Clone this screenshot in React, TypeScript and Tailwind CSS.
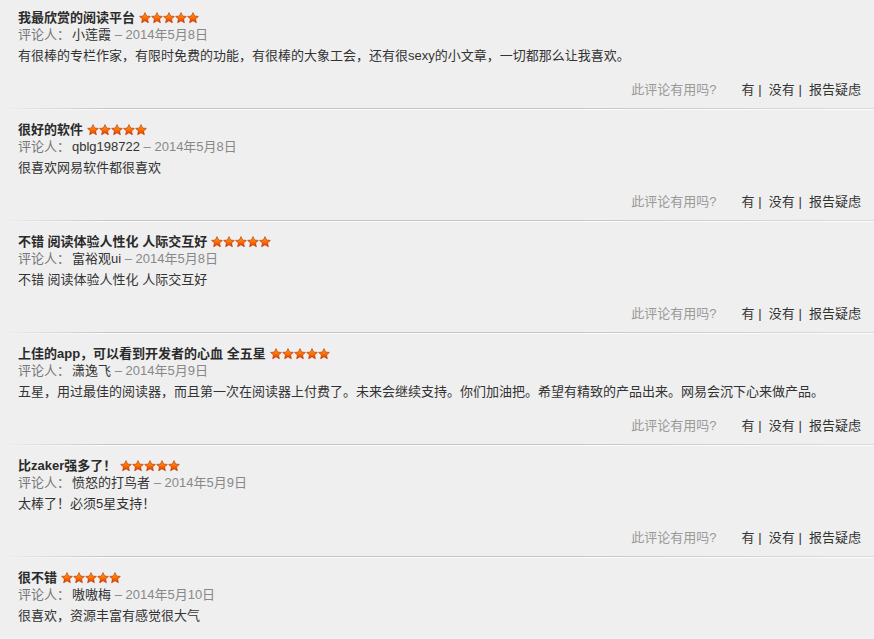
import React from "react";

interface Review {
  title: string;
  author: string;
  date: string;
  body: string;
}

const reviews: Review[] = [
  {
    title: "我最欣赏的阅读平台",
    author: "小莲霞",
    date: "2014年5月8日",
    body: "有很棒的专栏作家，有限时免费的功能，有很棒的大象工会，还有很sexy的小文章，一切都那么让我喜欢。",
  },
  {
    title: "很好的软件",
    author: "qblg198722",
    date: "2014年5月8日",
    body: "很喜欢网易软件都很喜欢",
  },
  {
    title: "不错 阅读体验人性化 人际交互好",
    author: "富裕观ui",
    date: "2014年5月8日",
    body: "不错 阅读体验人性化 人际交互好",
  },
  {
    title: "上佳的app，可以看到开发者的心血 全五星",
    author: "潇逸飞",
    date: "2014年5月9日",
    body: "五星，用过最佳的阅读器，而且第一次在阅读器上付费了。未来会继续支持。你们加油把。希望有精致的产品出来。网易会沉下心来做产品。",
  },
  {
    title: "比zaker强多了！",
    author: "愤怒的打鸟者",
    date: "2014年5月9日",
    body: "太棒了！必须5星支持！",
  },
  {
    title: "很不错",
    author: "嗷嗷梅",
    date: "2014年5月10日",
    body: "很喜欢，资源丰富有感觉很大气",
  },
];

function Star({ id }: { id: string }) {
  return (
    <svg width="12" height="12" viewBox="0 0 24 24" className="block">
      <defs>
        <linearGradient id={id} x1="0" y1="0" x2="0" y2="1">
          <stop offset="0" stopColor="#ffb020" />
          <stop offset="0.55" stopColor="#ff6a00" />
          <stop offset="1" stopColor="#d93c00" />
        </linearGradient>
      </defs>
      <path
        d="M12 1.2l3.2 6.9 7.5.8-5.6 5.1 1.6 7.4L12 17.6l-6.7 3.8 1.6-7.4-5.6-5.1 7.5-.8z"
        fill={`url(#${id})`}
        stroke="#b83200"
        strokeWidth="1.3"
        strokeLinejoin="round"
      />
    </svg>
  );
}

function Stars({ idx }: { idx: number }) {
  return (
    <span className="ml-[4px] inline-flex items-center">
      {[0, 1, 2, 3, 4].map((i) => (
        <Star key={i} id={`star-${idx}-${i}`} />
      ))}
    </span>
  );
}

function ReviewBlock({ r, idx, last }: { r: Review; idx: number; last: boolean }) {
  return (
    <div className="pt-[9px]">
      <div className="px-[18px]">
        <div className="flex items-center text-[13px] leading-[17px] font-bold text-[#2a2a2a]">
          <span>{r.title}</span>
          <Stars idx={idx} />
        </div>
        <div className="text-[13px] leading-[17px] text-[#777]">
          评论人：<span className="ml-[2px] text-[#333]">{r.author}</span>
          <span className="text-[#888]"> – {r.date}</span>
        </div>
        <div className="mt-[4px] text-[13px] leading-[18px] text-[#333]">{r.body}</div>
      </div>
      {!last && (
        <>
          <div className="mt-[16px] flex justify-end pr-[13px] text-[13px] leading-[18px]">
            <span className="text-[#999]">此评论有用吗?</span>
            <span className="ml-[25px] text-[#333]">有 | &nbsp;没有 | &nbsp;报告疑虑</span>
          </div>
          <div className="mt-[9px] h-px bg-[linear-gradient(to_right,rgba(190,190,190,0)_0%,#c6c6c6_12%,#c6c6c6_65%,rgba(205,205,205,0.6)_100%)]" />
          <div className="h-px bg-[linear-gradient(to_right,rgba(255,255,255,0)_0%,#fbfbfb_12%,#fbfbfb_100%)]" />
          <div className="h-[2px]" />
        </>
      )}
    </div>
  );
}

export default function App() {
  return (
    <div
      className="min-h-screen w-full bg-[#efefef]"
      style={{ fontFamily: '"Liberation Sans", "Noto Sans CJK SC", sans-serif' }}
    >
      {reviews.map((r, i) => (
        <ReviewBlock key={i} r={r} idx={i} last={i === reviews.length - 1} />
      ))}
    </div>
  );
}
